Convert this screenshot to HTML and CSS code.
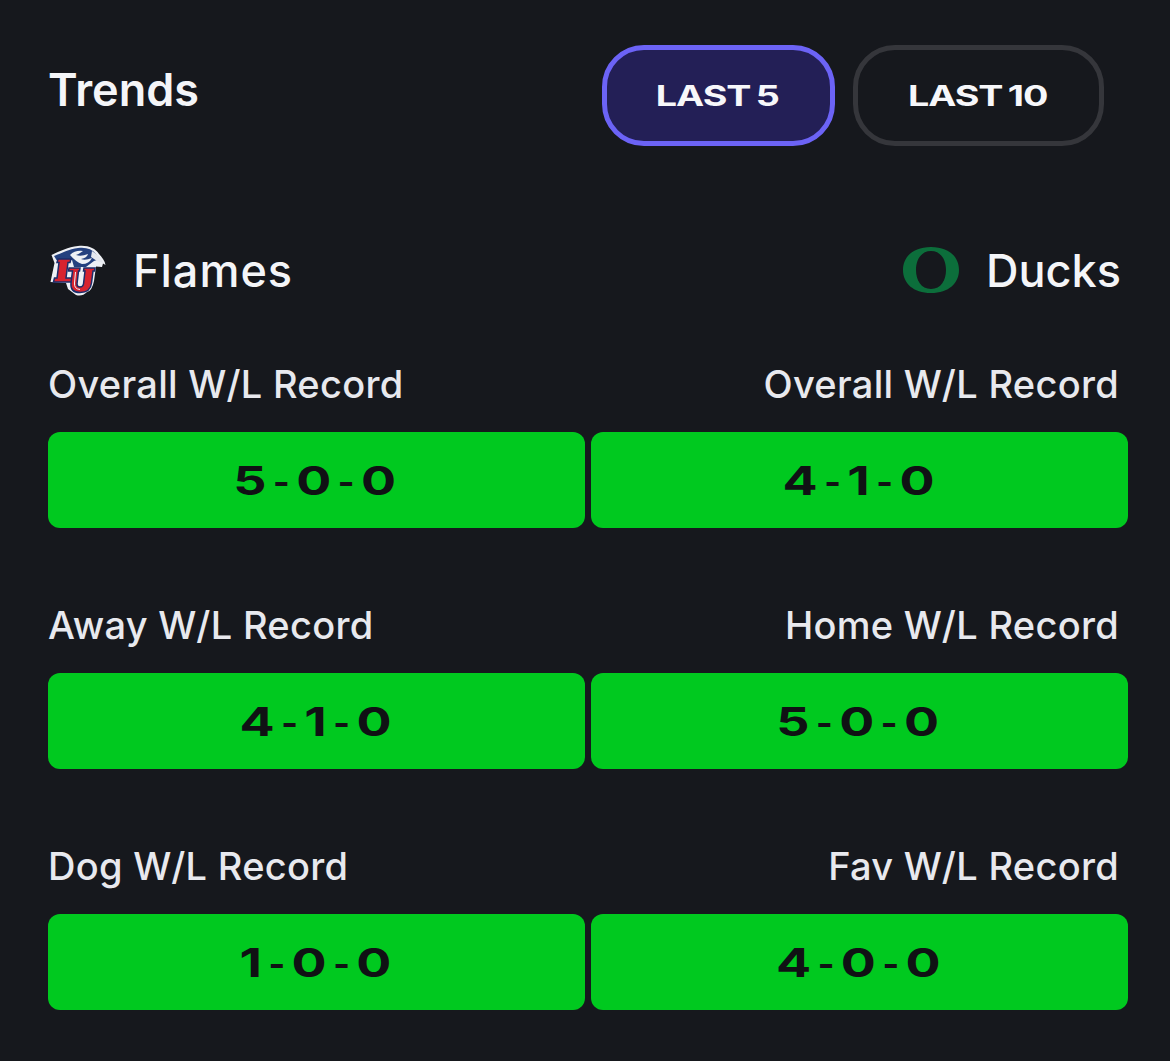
FILE: index.html
```html
<!DOCTYPE html>
<html lang="en">
<head>
<meta charset="utf-8">
<title>Trends</title>
<link rel="stylesheet" href="styles.css">
</head>
<body>
<main class="panel">
  <header class="top">
    <h1 class="title">Trends</h1>
    <div class="tabs">
      <button class="tab tab-active"><span class="wide">LAST 5</span></button>
      <button class="tab"><span class="wide">LAST 10</span></button>
    </div>
  </header>
  <section class="teams">
    <div class="team">
      <svg class="logo" viewBox="0 0 56 52" aria-label="Liberty">
        <path d="M1.500 10 C10 6 18 2 28 1 C38 0 45 3 49 9 C52 12 55 16 55.500 20 L53 18.500 L52 22 L46 21.500 L44 36 Q42 46 37 47 Q32 52 26 50 L18 44 L16 38 L0.500 37 L4.500 18 Z" fill="#eef0f5"/>
        <path d="M4 11 C12 8 19 4 28 3 C36 2 42 4 46 9 L50 14 L44 16 Q40 19 36 22 L24 22 L22 15 H6.500 Z" fill="#24407f"/>
        <path d="M20 10 Q25 5 33 6 Q29 9 26 10 Q31 12 38 9 Q37 13 31 14 Q35 16 42 13 Q39 19 32 19 Q26 17 20 10 Z" fill="#eef0f5"/>
        <path d="M42 6 L49 11 L53.500 18 L47 16 L41 12 Z" fill="#e4e7ef"/>
        <path d="M8 14 H21 L20 17.500 H18 L16 33 H24 L23 37 H3.500 L4.500 33 H7 L9 17.500 H7 Z" fill="#d8232f" stroke="#1b2d6b" stroke-width="1.500"/>
        <path d="M19 23 H30 L29.500 26 H28.500 L27 39 Q27 42 30 42 Q33 42 33.500 39 L35 26 H33.500 L34 23 H45 L44.500 26 H43 L41.500 38 Q40.500 47.500 30 47.500 Q20 47.500 21 38 L22.500 26 H18.500 Z" fill="#d8232f" stroke="#1b2d6b" stroke-width="1.500"/>
        <path d="M25.500 27 L24.500 38 Q24 44 30 44.500" fill="none" stroke="#eef0f5" stroke-width="1"/>
      </svg>
      <span class="team-name team-name-wide">Flames</span>
    </div>
    <div class="team">
      <svg class="logo logo-o" viewBox="0 0 56 46" aria-label="Oregon">
        <path fill-rule="evenodd" d="M28 0 C46 0 56 10 56 23 C56 36 46 46 28 46 C10 46 0 36 0 23 C0 10 10 0 28 0 Z M28 4 C18 4 13 13 13 23 C13 33 18 42 28 42 C38 42 43 33 43 23 C43 13 38 4 28 4 Z" fill="#0c6e3b"/>
      </svg>
      <span class="team-name">Ducks</span>
    </div>
  </section>
  <section class="grid">
    <div class="stat"><div class="label">Overall W/L Record</div><div class="cell"><span class="wide">5<span class="dash">-</span>0<span class="dash">-</span>0</span></div></div>
    <div class="stat stat-right"><div class="label">Overall W/L Record</div><div class="cell"><span class="wide">4<span class="dash">-</span>1<span class="dash">-</span>0</span></div></div>
    <div class="stat"><div class="label">Away W/L Record</div><div class="cell"><span class="wide">4<span class="dash">-</span>1<span class="dash">-</span>0</span></div></div>
    <div class="stat stat-right"><div class="label">Home W/L Record</div><div class="cell"><span class="wide">5<span class="dash">-</span>0<span class="dash">-</span>0</span></div></div>
    <div class="stat"><div class="label">Dog W/L Record</div><div class="cell"><span class="wide">1<span class="dash">-</span>0<span class="dash">-</span>0</span></div></div>
    <div class="stat stat-right"><div class="label">Fav W/L Record</div><div class="cell"><span class="wide">4<span class="dash">-</span>0<span class="dash">-</span>0</span></div></div>
  </section>
</main>
</body>
</html>
```
FILE: styles.css
```css
* { box-sizing: border-box; }
html, body { margin: 0; height: 100%; }
body {
  background: #16181d;
  color: #f4f5f8;
  font-family: "Inter", "Noto Sans", sans-serif;
}
.panel { padding: 45px 42px 0 48px; }
.top {
  display: flex;
  justify-content: space-between;
  align-items: flex-start;
  height: 101px;
  padding-right: 24px;
}
.title {
  margin: 0;
  font-size: 45px;
  line-height: 90px;
  font-weight: 600;
  height: 90px;
}
.tabs { display: flex; gap: 18px; }
.tab {
  width: 251px;
  height: 101px;
  border: 5px solid #35363b;
  border-radius: 42px;
  background: transparent;
  color: #f7f7fa;
  font-family: "Inter", sans-serif;
  font-size: 29px;
  font-weight: 700;
  letter-spacing: -0.8px;
  word-spacing: -2px;
  padding: 0 2px 0 0;
}
.tab-active {
  width: 233px;
  border-color: #6c63f6;
  background: #231f56;
}
.wide { display: inline-block; transform: scaleX(1.3); }
.teams {
  display: flex;
  justify-content: space-between;
  align-items: center;
  margin-top: 91px;
  height: 68px;
  padding-right: 7px;
}
.team { display: flex; align-items: center; gap: 27px; padding-left: 2px; }
.logo { width: 56px; height: 52px; }
.logo-o { height: 46px; margin-bottom: 3px; }
.team-name { font-size: 45px; font-weight: 500; line-height: 1; position: relative; top: -1px; }
.team-name-wide { letter-spacing: 1px; }
.grid {
  display: grid;
  grid-template-columns: 537px 537px;
  column-gap: 6px;
  row-gap: 74px;
  margin-top: 56px;
}
.label {
  font-size: 38px;
  line-height: 46px;
  height: 71px;
  letter-spacing: 0.3px;
  color: #e8e9ee;
  font-weight: 500;
  display: flex;
  align-items: flex-start;
}
.stat-right .label { justify-content: flex-end; padding-right: 9px; }
.cell {
  height: 96px;
  border-radius: 12px;
  background: #00c91f;
  color: #101114;
  display: flex;
  align-items: center;
  justify-content: center;
  font-family: "Inter", sans-serif;
  font-size: 40px;
  font-weight: 700;
  padding-right: 3px;
}
.dash { font-size: 27px; font-weight: 900; margin: 0 5px; position: relative; top: -3px; }
```
